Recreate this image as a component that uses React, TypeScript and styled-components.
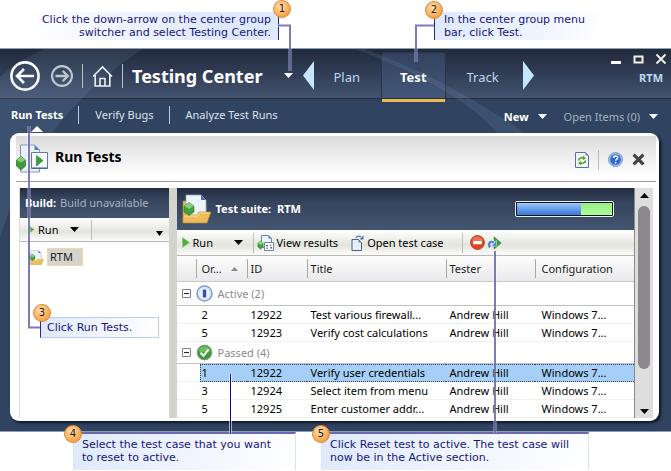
import React from "react";
import styled, { createGlobalStyle, css } from "styled-components";

const GlobalStyle = createGlobalStyle`
  * { box-sizing: border-box; }
  body { margin: 0; background: #fff; }
  button { margin: 0; padding: 0; border: 0; background: none; font: inherit; color: inherit; cursor: pointer; }
  a { color: inherit; text-decoration: none; }
  h1, h2, h3, p { margin: 0; font-size: inherit; font-weight: inherit; }
  svg { display: block; flex: none; }
`;

const Page = styled.div`
  position: relative;
  padding: 48px 0 39px;
  font: 11px/18px "Noto Sans", "Open Sans", sans-serif;
  color: #1c1c1c;
`;

const AppWindow = styled.div`
  position: relative;
  overflow: hidden;
  background: #304361;
  border-top: 1px solid #8ba0b5;
  border-bottom: 1px solid #8d9db0;
  padding-bottom: 10px;
`;

const Sweep = styled.svg`
  position: absolute;
  left: 0;
  top: 0;
  pointer-events: none;
`;

/* ---------- title bar ---------- */

const TitleBar = styled.header`
  display: flex;
  align-items: stretch;
  height: 50px;
  padding: 0 4px 0 10px;
  background: linear-gradient(#222a3c, #2f3b53 45%, #43536f);
  border-bottom: 1px solid #292d35;
`;

const NavCluster = styled.div`
  display: flex;
  align-items: center;
  padding-top: 4px;
  gap: 9px;
  > button:first-child { padding-right: 2px; }
`;

const IconButton = styled.button`
  display: flex;
  align-items: center;
  justify-content: center;
`;

const BarRule = styled.span`
  width: 1px;
  height: 24px;
  background: #b9c2cf;
`;

const CenterSwitcher = styled.button`
  display: flex;
  align-items: center;
  gap: 22px;
  padding: 0 10px 0 0;
  font-size: 18px;
  font-weight: 700;
  color: #fff;
  white-space: nowrap;
`;

const Tabs = styled.nav`
  display: flex;
  align-items: stretch;
`;

const TabLink = styled.a<{ $active?: boolean }>`
  position: relative;
  display: flex;
  align-items: center;
  margin: 0 2px;
  padding: 6px 18px 0;
  font-size: 13px;
  color: #b9d9ee;
  ${(p) =>
    p.$active &&
    css`
      margin-top: 4px;
      padding-top: 2px;
      font-weight: 700;
      color: #fff;
      background: linear-gradient(#33435f, #44577a);
      border-radius: 3px 3px 0 0;
      box-shadow: 0 0 0 1px #2a3448;
      &::after {
        content: "";
        position: absolute;
        left: 0;
        right: 0;
        bottom: -4px;
        height: 3px;
        background: #ecba4c;
      }
    `}
`;

const TabArrow = styled(IconButton)`
  padding-top: 4px;
  margin-right: -1px;
  &:last-child { margin: 0 0 0 4px; }
`;

const WindowSide = styled.div`
  display: flex;
  flex-direction: column;
  align-items: flex-end;
  margin-left: auto;
  padding-top: 4px;
  gap: 4px;
`;

const WindowButtons = styled.div`
  display: flex;
  align-items: center;
  gap: 11px;
`;

const ProjectName = styled.span`
  padding-right: 4px;
  font-weight: 700;
  color: #b9dcf2;
`;

/* ---------- sub navigation ---------- */

const SubNav = styled.nav`
  position: relative;
  display: flex;
  align-items: center;
  height: 34px;
  padding: 0 13px 2px 11px;
  color: #e3e9f0;
`;

const SubLink = styled.a<{ $active?: boolean }>`
  position: relative;
  font-weight: ${(p) => (p.$active ? 700 : 400)};
  color: ${(p) => (p.$active ? "#fff" : "#dbe3ec")};
  ${(p) =>
    p.$active &&
    css`
      &::after {
        content: "";
        position: absolute;
        left: 50%;
        top: 20px;
        margin-left: -6px;
        border: 6px solid transparent;
        border-top: 0;
        border-bottom-color: #fff;
      }
    `}
`;

const SubRule = styled.span`
  width: 1px;
  height: 18px;
  margin: 0 16px 0 15px;
  background: #b5cfe4;
`;

const SubMenu = styled.button<{ $muted?: boolean }>`
  display: flex;
  align-items: center;
  gap: 9px;
  margin-left: 17px;
  padding-top: 3px;
  font-weight: ${(p) => (p.$muted ? 400 : 700)};
  color: ${(p) => (p.$muted ? "#a6afbb" : "#fff")};
  &:first-of-type { margin-left: auto; }
`;

/* ---------- content panel ---------- */

const Panel = styled.main`
  position: relative;
  margin: 0 12px 0 10px;
  padding: 3px 3px 3px 6px;
  background: #fff;
  border-radius: 9px;
  box-shadow: 2px 2px 3px #0c1626;
`;

const PanelHeader = styled.div`
  display: flex;
  align-items: center;
  height: 46px;
  padding: 0 11px 0 0;
  margin-bottom: 6px;
  background: linear-gradient(#dcdcdc, #fff 90%);
  border-bottom: 1px solid #98989c;
`;

const PanelTitle = styled.h1`
  padding: 0 0 4px 7px;
  font-size: 14px;
  font-weight: 700;
  color: #000;
`;

const PanelTools = styled.div`
  display: flex;
  align-items: center;
  gap: 9px;
  margin-left: auto;
  padding-top: 2px;
`;

const ToolRule = styled.span`
  width: 1px;
  height: 20px;
  background: #bdbdb2;
`;

const Columns = styled.div`
  display: flex;
  align-items: stretch;
  margin-left: 3px;
  padding-right: 3px;
`;

const BuildPane = styled.section`
  flex: 0 0 148px;
  border-left: 1px solid #dcdcdc;
`;

const Splitter = styled.div`
  flex: 0 0 8px;
  background: #d4d3ce;
`;

const SuitePane = styled.section`
  flex: 1;
  min-width: 0;
`;

const PaneHeading = styled.h2<{ $tall?: boolean }>`
  display: flex;
  align-items: center;
  gap: 4px;
  height: ${(p) => (p.$tall ? 42 : 30)}px;
  padding: 0 20px 0 5px;
  background: linear-gradient(#242d40, #36445e 35%, #435570);
  color: #aab1bc;
  white-space: pre;
  strong { color: #fff; }
`;

const Toolbar = styled.div<{ $height: number }>`
  display: flex;
  align-items: center;
  height: ${(p) => p.$height}px;
  padding-left: 5px;
  background: linear-gradient(#fff, #e4e4de 60%, #fbfbfa);
  border-bottom: 1px solid #b7b7b7;
  color: #000;
`;

const ToolButton = styled.button<{ $width?: number }>`
  display: flex;
  align-items: center;
  gap: 3px;
  width: ${(p) => (p.$width ? p.$width + "px" : "auto")};
  white-space: nowrap;
  svg + svg { margin-left: auto; }
`;

const BuildTools = styled(Toolbar)`
  padding: 0 6px 0 9px;
  ${ToolRule} { margin: 0 0 0 12px; }
  > button:last-child { margin: 8px 0 0 auto; }
`;

const SuiteTools = styled(Toolbar)`
  ${ToolRule} { margin: 0 3px 0 10px; }
  > button:nth-of-type(3) { margin-left: 13px; }
  > button:nth-of-type(4) { margin: 0 3px 0 4px; }
  ${ToolRule}:nth-of-type(2) { margin-left: 18px; }
`;

const Tree = styled.div`
  padding: 6px 9px;
`;

const TreeItem = styled.button`
  display: flex;
  align-items: center;
  gap: 3px;
  span {
    width: 36px;
    height: 18px;
    line-height: 16px;
    text-align: left;
    padding-left: 2px;
    background: #d4d3ce;
    border: 1px solid #f3d6a0;
  }
`;

const Progress = styled.span`
  display: flex;
  width: 99px;
  height: 16px;
  margin-left: auto;
  padding: 1px;
  background: #101418;
  border: 1px solid #e9eef5;
  border-radius: 2px;
`;

const Segment = styled.span<{ $share: number; $tone: "run" | "pass" }>`
  flex: ${(p) => p.$share};
  background: ${(p) =>
    p.$tone === "run" ? "linear-gradient(#a5c9fa, #6ba0ec 45%, #3a76d4)" : "linear-gradient(#98ee84, #adfc9b)"};
`;

/* ---------- grid ---------- */

const Grid = styled.table`
  width: 100%;
  table-layout: fixed;
  border-collapse: separate;
  border-spacing: 0;
  th, td { padding: 0; text-align: left; font-weight: 400; white-space: nowrap; overflow: hidden; }
`;

const HeadCell = styled.th`
  height: 26px;
  background: linear-gradient(#a9a99c, #a9a99c) left center / 1px 19px no-repeat,
    linear-gradient(#fdfdfd, #e9e9ec);
  border-bottom: 1px solid #c9c9c9;
  && { padding-left: 4px; }
  &:nth-child(1) { background-position: right 3px center, 0 0; }
  &&:nth-child(2) { background: linear-gradient(#fdfdfd, #e9e9ec); padding-left: 2px; }
  &&:nth-child(6) { padding-left: 7px; }
  span { display: flex; align-items: center; gap: 9px; }
`;

const GroupCell = styled.td<{ $height: number }>`
  height: ${(p) => p.$height}px;
  border-bottom: 1px solid #bcc3cb;
  color: #8c8c8c;
  div { display: flex; align-items: center; gap: 5px; padding-left: 5px; }
`;

const Row = styled.tr<{ $selected?: boolean }>`
  td {
    height: 18px;
    line-height: 17px;
    padding-left: 4px;
    border-bottom: 1px solid #f0f0f0;
    color: #000;
  }
  td:nth-child(2) { padding-left: 2px; }
  td:nth-child(6) { padding-left: 7px; }
  ${(p) =>
    p.$selected &&
    css`
      td + td {
        line-height: 16px;
        background: #a5cff7;
        border-top: 1px dotted #2c3f55;
        border-bottom: 1px dotted #2c3f55;
      }
      td:nth-child(2) { border-left: 1px dotted #2c3f55; padding-left: 1px; }
    `}
`;

const ScrollTrack = styled.div`
  flex: 0 0 19px;
  display: flex;
  flex-direction: column;
  align-items: center;
  padding: 5px 0 4px;
  background: #dedede;
  border-left: 1px solid #8a8a8a;
`;

const ScrollThumb = styled.div`
  flex: 0 0 163px;
  width: 12px;
  margin: 8px 0 auto;
  border-radius: 6px;
  background: #8c898c;
`;

/* ---------- callouts ---------- */

const Callout = styled.aside<{ $x: number; $y: number; $w: number; $kind: "right" | "left" | "box" | "foot" }>`
  position: absolute;
  left: ${(p) => p.$x}px;
  top: ${(p) => p.$y}px;
  width: ${(p) => p.$w}px;
  padding: 1px 9px;
  font: 11px/13px "DejaVu Sans", sans-serif;
  color: #16167a;
  white-space: nowrap;
  ${(p) =>
    p.$kind === "right" &&
    css`
      text-align: right;
      padding-right: 7px;
      border-right: 1px solid #2b2b82;
      background: linear-gradient(90deg, #fff, #dfe9fd 75%);
    `}
  ${(p) =>
    p.$kind === "left" &&
    css`
      border-left: 1px solid #2b2b82;
      background: linear-gradient(100deg, #dfe9fd, #eef4fe 60%, #fff);
    `}
  ${(p) =>
    p.$kind === "box" &&
    css`
      padding: 3px 6px;
      border: 1px solid #b9cdf5;
      border-left-color: #2b2b82;
      background: linear-gradient(100deg, #dfe9fd, #fff);
    `}
  ${(p) =>
    p.$kind === "foot" &&
    css`
      padding: 4px 8px 6px;
      border: 1px solid #d6e4f8;
      border-top: 2px solid #6a6ab0;
      border-bottom: 0;
      background: linear-gradient(100deg, #dfe9fd, #fff);
    `}
`;

const Badge = styled.span<{ $x: number; $y: number }>`
  position: absolute;
  left: ${(p) => p.$x - 9}px;
  top: ${(p) => p.$y - 9}px;
  width: 18px;
  height: 18px;
  border-radius: 9px;
  border: 1px solid #d98a3c;
  background: radial-gradient(circle at 40% 35%, #ffe0b0, #fbb05a 55%, #f08a1e);
  font: 10px/16px "DejaVu Sans", sans-serif;
  text-align: center;
  color: #1c1c1c;
`;

const Leaders = styled.svg`
  position: absolute;
  left: 0;
  top: 0;
  pointer-events: none;
`;

/* ---------- icons ---------- */

const Caret = ({ size = 9, color = "#000" }: { size?: number; color?: string }) => (
  <svg width={size} height={5} viewBox="0 0 10 5" preserveAspectRatio="none" aria-hidden>
    <path d="M0 0h10L5 5z" fill={color} />
  </svg>
);

const CircleArrow = ({ size, flip, color }: { size: number; flip?: boolean; color: string }) => (
  <svg width={size} height={size} viewBox="0 0 30 30" fill="none" stroke={color} aria-hidden>
    <circle cx="15" cy="15" r="13.6" strokeWidth={flip ? 3 : 2.6} />
    <path
      d={flip ? "M6 15h17M16 8l7 7-7 7" : "M24 15H7M14 8l-7 7 7 7"}
      strokeWidth={flip ? 3.2 : 2.6}
    />
  </svg>
);

const HomeIcon = () => (
  <svg width="21" height="22" viewBox="0 0 21 22" fill="none" stroke="#eef1f5" strokeWidth="1.6" aria-hidden>
    <path d="M1 11.5 10.5 2 20 11.5M3.2 10v11h14.6V10M8 21v-7.500h5V21" />
  </svg>
);

const PlayIcon = ({ w = 8, h = 11 }: { w?: number; h?: number }) => (
  <svg width={w} height={h} viewBox="0 0 8 11" aria-hidden>
    <path d="M.5.5 7.500 5.500.5 10.500z" fill="#4cab3f" stroke="#8fcb86" strokeWidth=".8" />
  </svg>
);

const RunTestsIcon = () => (
  <svg width="32" height="30" viewBox="0 0 32 30" aria-hidden>
    <path d="M4.500 1h14l5 5v22H4.500z" fill="#eaf1fb" stroke="#8295bd" />
    <path d="M18.500 1v5h5z" fill="#5f7fb5" />
    <path d="M15.500 8.500h16v16h-16z" fill="#f6faff" stroke="#5f78ad" />
    <path d="M15.500 24h16" stroke="#3d5690" />
    <path d="M20.500 11.500 27 16.500l-6.500 5.500z" fill="#3ba034" stroke="#237b24" strokeWidth=".6" />
    <path d="M5 12.500 9.500 16v6L5 26 .5 22v-6z" fill="#3f9a3c" stroke="#2a6f2c" strokeWidth=".7" />
    <path d="M5 12.500 9.500 16 5 18.500.5 16z" fill="#86cf7c" />
  </svg>
);

const SuiteIcon = ({ size = 30 }: { size?: number }) => (
  <svg width={size} height={size} viewBox="0 0 30 30" aria-hidden>
    <path d="M1 7h8l2 3h13v18H1z" fill="#e9bd5c" stroke="#b98a2c" strokeWidth=".6" />
    <path d="M4 1h15l5 5v16H4z" fill="#eef4fc" stroke="#93a6c8" strokeWidth=".8" />
    <path d="M19 1v5h5z" fill="#4f6fa8" />
    <path d="M1 21h14l2-3h12l-4 11H1z" fill="#eebb58" stroke="#b98a2c" strokeWidth=".7" />
    <path d="M2 22h14l2-3h9" fill="none" stroke="#fbe3a4" />
    <path d="M7 8.500 12 12v6l-5 3.500L2 18v-6z" fill="#42a03e" stroke="#2d7a30" strokeWidth=".6" />
    <path d="M7 8.500 12 12l-5 3-5-3z" fill="#85cf7b" />
  </svg>
);

const RefreshPageIcon = () => (
  <svg width="14" height="16" viewBox="0 0 14 16" aria-hidden>
    <path d="M.5.5h10l3 3v12H.5z" fill="#f0f5fc" stroke="#5d7295" />
    <path d="M10.500.5v3h3z" fill="#5a7cb8" />
    <g fill="none" stroke="#3f9a20" strokeWidth="1.500">
      <path d="M3.500 8.500C3.500 6 6 5.500 9 6" />
      <path d="M10.500 8.500c0 2.500-2.500 3-5.500 2.500" />
    </g>
    <path d="m8 3.500 3 2.700L8 8.500zM6 8.500l-3 2.700 3 2.300z" fill="#5fae28" />
  </svg>
);

const HelpIcon = () => (
  <svg width="15" height="15" viewBox="0 0 15 15" aria-hidden>
    <circle cx="7.500" cy="7.500" r="7" fill="#9cc0ee" stroke="#7c9ccc" />
    <circle cx="7.500" cy="7.500" r="5.300" fill="#2f68cf" />
    <path d="M5.500 6c0-2.600 4.200-2.500 4.200-.2 0 1.500-2.100 1.400-2.100 3M7.600 10v1.500" fill="none" stroke="#fff" strokeWidth="1.500" />
  </svg>
);

const CrossIcon = ({ size, color, weight }: { size: number; color: string; weight: number }) => (
  <svg width={size} height={size} viewBox="0 0 12 12" aria-hidden>
    <path d="m1.500 1.500 9 9m0-9-9 9" stroke={color} strokeWidth={weight} />
  </svg>
);

const ResultsIcon = () => (
  <svg width="17" height="16" viewBox="0 0 17 16" aria-hidden>
    <path d="M4.500.5h7l3 3v9h-10z" fill="#edf4fd" stroke="#6883b3" />
    <path d="M11.500.5v3h3z" fill="#4f72ae" />
    <path d="M7.500 7.500h9v8h-9z" fill="#fff" stroke="#6a86b8" />
    <path d="M9 10h2v1.500H9zM13 12h2v1.500h-2z" fill="#4a7ad8" />
    <path d="M12.500 9.500h2V11h-2zM9 12.500h2V14H9z" fill="#e08a5a" />
    <path d="m3.500 5.500 3 2.500v4l-3 2.500-3-2.500V8z" fill="#3f9f3c" />
    <path d="m3.500 5.500 3 2.500-3 2-3-2z" fill="#8bd181" />
  </svg>
);

const OpenCaseIcon = () => (
  <svg width="13" height="16" viewBox="0 0 13 16" aria-hidden>
    <path d="M1 4.500h6.500l3 3v8H1z" fill="#e6eefa" stroke="#4c5f83" />
    <path d="M7.500 4.500v3h3z" fill="#5f7fb5" />
    <path d="M5 3c1-2 3-2.500 5-1" fill="none" stroke="#5a7ab5" strokeWidth="1.300" />
    <path d="M12.500.3v4.200H8.700z" fill="#4c6ca8" />
  </svg>
);

const BlockIcon = () => (
  <svg width="15" height="15" viewBox="0 0 15 15" aria-hidden>
    <circle cx="7.500" cy="7.500" r="6.900" fill="#e0441a" stroke="#b0482c" />
    <path d="M2 6a5.600 5.600 0 0 1 11 0z" fill="#f28a64" opacity=".7" />
    <rect x="3" y="6" width="9" height="3.200" rx=".6" fill="#fff" />
  </svg>
);

const ResetIcon = () => (
  <svg width="14" height="14" viewBox="0 0 14 14" aria-hidden>
    <path d="M6 .8 13.200 7 6 13.200V10l3-3-3-3z" fill="#3f9d39" stroke="#2c7a2c" strokeWidth=".5" />
    <path d="M1.800 11.500C0 7 2.500 4.500 6 6.500" fill="none" stroke="#4a7fd6" strokeWidth="2.200" />
    <path d="M8.500 4.500v5.700H3.500z" fill="#4a7fd6" stroke="#dce8fb" strokeWidth=".5" />
  </svg>
);

const ActiveIcon = () => (
  <svg width="17" height="17" viewBox="0 0 17 17" aria-hidden>
    <circle cx="8.500" cy="8.500" r="7.500" fill="#fff" stroke="#7d9cd6" strokeWidth="1.600" />
    <circle cx="8.500" cy="8.500" r="5.800" fill="#eaf1fc" stroke="#cbd9f2" />
    <rect x="6.800" y="4.500" width="3.400" height="8" rx="1" fill="#2e55a8" />
  </svg>
);

const PassedIcon = () => (
  <svg width="17" height="17" viewBox="0 0 17 17" aria-hidden>
    <circle cx="8.500" cy="8.500" r="7.400" fill="#3f9c38" stroke="#8a9a8a" />
    <path d="M2.500 7a6.200 6.200 0 0 1 12 0c-4 2-8 2-12 0z" fill="#8fd07f" opacity=".6" />
    <path d="m4.500 8.800 3 3 5-6.300" fill="none" stroke="#fff" strokeWidth="2" />
  </svg>
);

const CollapseIcon = () => (
  <svg width="9" height="9" viewBox="0 0 9 9" fill="none" stroke="#80838c" aria-hidden>
    <path d="M.5.5h8v8h-8z" fill="#fff" />
    <path d="M2 4.500h5" stroke="#222" />
  </svg>
);

/* ---------- data ---------- */

type TestCase = { order: number; id: number; title: string; selected?: boolean };

const groups: { name: string; count: number; height: number; icon: React.ReactNode; cases: TestCase[] }[] = [
  {
    name: "Active",
    count: 2,
    height: 24,
    icon: <ActiveIcon />,
    cases: [
      { order: 2, id: 12922, title: "Test various firewall..." },
      { order: 5, id: 12923, title: "Verify cost calculations" },
    ],
  },
  {
    name: "Passed",
    count: 4,
    height: 22,
    icon: <PassedIcon />,
    cases: [
      { order: 1, id: 12922, title: "Verify user credentials", selected: true },
      { order: 3, id: 12924, title: "Select item from menu" },
      { order: 5, id: 12925, title: "Enter customer addr..." },
    ],
  },
];

const leaderPaths = ["M278 25.500H290V71", "M434 25.500H416V62", "M40 327.500H29V126", "M495 251V433"];

export default function App() {
  return (
    <Page>
      <GlobalStyle />
      <AppWindow>
        <TitleBar>
          <NavCluster>
            <IconButton aria-label="Back"><CircleArrow size={30} color="#fff" /></IconButton>
            <IconButton aria-label="Forward"><CircleArrow size={22} flip color="#c3c6cb" /></IconButton>
            <BarRule />
            <IconButton aria-label="Home"><HomeIcon /></IconButton>
            <BarRule />
            <CenterSwitcher>
              Testing Center
              <Caret color="#fff" />
            </CenterSwitcher>
          </NavCluster>
          <Tabs aria-label="Center group">
            <TabArrow aria-label="Previous">
              <svg width="11" height="29" viewBox="0 0 11 29" aria-hidden><path d="M11 0v29L0 14.500z" fill="#c5e7fb" /></svg>
            </TabArrow>
            <TabLink href="#plan">Plan</TabLink>
            <TabLink href="#test" $active aria-current="page">Test</TabLink>
            <TabLink href="#track">Track</TabLink>
            <TabArrow aria-label="Next">
              <svg width="11" height="29" viewBox="0 0 11 29" aria-hidden><path d="M0 0v29l11-14.500z" fill="#c5e7fb" /></svg>
            </TabArrow>
          </Tabs>
          <WindowSide>
            <WindowButtons>
              <IconButton aria-label="Minimize">
                <svg width="11" height="11" viewBox="0 0 11 11" aria-hidden><path d="M0 7h10v3H0z" fill="#fff" /></svg>
              </IconButton>
              <IconButton aria-label="Maximize">
                <svg width="11" height="11" viewBox="0 0 11 11" aria-hidden><path d="M1.500 2.500h8v6h-8z" fill="none" stroke="#f3f0e4" strokeWidth="2" /></svg>
              </IconButton>
              <IconButton aria-label="Close"><CrossIcon size={12} color="#f3f0e4" weight={2} /></IconButton>
            </WindowButtons>
            <ProjectName>RTM</ProjectName>
          </WindowSide>
        </TitleBar>
        <Sweep width="660" height="384" viewBox="0 0 660 384" aria-hidden>
          <g fill="#a9c4ec" fillOpacity=".1">
            <path d="M45 0H143C95 30 55 75 35 110 20 135 8 160 0 190V28Q20 10 45 0z" />
            <path d="M355 0h10Q450 32 525 84h-28Q460 40 355 0z" />
          </g>
        </Sweep>
        <SubNav aria-label="Test">
          <SubLink href="#run" $active aria-current="page">Run Tests</SubLink>
          <SubRule />
          <SubLink href="#bugs">Verify Bugs</SubLink>
          <SubRule />
          <SubLink href="#analyze">Analyze Test Runs</SubLink>
          <SubMenu>New <Caret color="#fff" /></SubMenu>
          <SubMenu $muted>Open Items (0) <Caret color="#fff" /></SubMenu>
        </SubNav>
        <Panel>
          <PanelHeader>
            <RunTestsIcon />
            <PanelTitle>Run Tests</PanelTitle>
            <PanelTools>
              <IconButton aria-label="Refresh"><RefreshPageIcon /></IconButton>
              <ToolRule />
              <IconButton aria-label="Help"><HelpIcon /></IconButton>
              <IconButton aria-label="Close view"><CrossIcon size={13} color="#444" weight={3} /></IconButton>
            </PanelTools>
          </PanelHeader>
          <Columns>
            <BuildPane>
              <PaneHeading><strong>Build:</strong>Build unavailable</PaneHeading>
              <BuildTools $height={24}>
                <ToolButton $width={50}><PlayIcon w={6} h={7} />Run<Caret /></ToolButton>
                <ToolRule />
                <IconButton aria-label="More"><Caret size={7} /></IconButton>
              </BuildTools>
              <Tree>
                <TreeItem><SuiteIcon size={15} /><span>RTM</span></TreeItem>
              </Tree>
            </BuildPane>
            <Splitter />
            <SuitePane>
              <PaneHeading $tall>
                <SuiteIcon />
                <strong>Test suite:  RTM</strong>
                <Progress role="img" aria-label="Test progress">
                  <Segment $share={65} $tone="run" />
                  <Segment $share={32} $tone="pass" />
                </Progress>
              </PaneHeading>
              <SuiteTools $height={26}>
                <ToolButton $width={61}><PlayIcon />Run<Caret /></ToolButton>
                <ToolRule />
                <ToolButton><ResultsIcon />View results</ToolButton>
                <ToolButton><OpenCaseIcon />Open test case</ToolButton>
                <ToolRule />
                <IconButton aria-label="Block test"><BlockIcon /></IconButton>
                <IconButton aria-label="Reset test to active"><ResetIcon /></IconButton>
              </SuiteTools>
              <Grid>
                <colgroup>
                  <col style={{ width: 23 }} />
                  <col style={{ width: 47 }} />
                  <col style={{ width: 60 }} />
                  <col style={{ width: 139 }} />
                  <col style={{ width: 89 }} />
                  <col />
                </colgroup>
                <thead>
                  <tr>
                    <HeadCell aria-label="Group" />
                    <HeadCell>
                      <span>
                        Or...
                        <svg width="7" height="4" viewBox="0 0 7 4" aria-hidden><path d="M0 4h7L3.500 0z" fill="#8a8a8a" /></svg>
                      </span>
                    </HeadCell>
                    <HeadCell>ID</HeadCell>
                    <HeadCell>Title</HeadCell>
                    <HeadCell>Tester</HeadCell>
                    <HeadCell>Configuration</HeadCell>
                  </tr>
                </thead>
                {groups.map((g) => (
                  <tbody key={g.name}>
                    <tr>
                      <GroupCell colSpan={6} $height={g.height}>
                        <div>
                          <IconButton aria-label={"Collapse " + g.name}><CollapseIcon /></IconButton>
                          {g.icon}
                          {g.name} ({g.count})
                        </div>
                      </GroupCell>
                    </tr>
                    {g.cases.map((c) => (
                      <Row key={c.id} $selected={c.selected}>
                        <td />
                        <td>{c.order}</td>
                        <td>{c.id}</td>
                        <td>{c.title}</td>
                        <td>Andrew Hill</td>
                        <td>Windows 7...</td>
                      </Row>
                    ))}
                  </tbody>
                ))}
              </Grid>
            </SuitePane>
            <ScrollTrack>
              <svg width="9" height="5" viewBox="0 0 9 5" aria-hidden><path d="M0 5h9L4.500 0z" /></svg>
              <ScrollThumb />
              <Caret />
            </ScrollTrack>
          </Columns>
        </Panel>
      </AppWindow>

      <Callout $kind="right" $x={23} $y={12} $w={256}>
        Click the down-arrow on the center group<br />switcher and select Testing Center.
      </Callout>
      <Callout $kind="left" $x={434} $y={12} $w={169}>
        In the center group menu<br />bar, click Test.
      </Callout>
      <Callout $kind="box" $x={40} $y={317} $w={119}>Click Run Tests.</Callout>
      <Callout $kind="foot" $x={73} $y={432} $w={223}>
        Select the test case that you want<br />to reset to active.
      </Callout>
      <Callout $kind="foot" $x={321} $y={432} $w={268}>
        Click Reset test to active. The test case will<br />now be in the Active section.
      </Callout>
      <Leaders width="660" height="436" viewBox="0 0 660 436" fill="none" aria-hidden>
        {leaderPaths.map((d) => (
          <React.Fragment key={d}>
            <path d={d} stroke="#fff" strokeOpacity=".55" strokeWidth="3" />
            <path d={d} stroke="#5050a0" strokeOpacity=".75" strokeWidth="2" />
          </React.Fragment>
        ))}
        <path d="M230.500 374V433" stroke="#fff" strokeOpacity=".6" strokeWidth="3" />
        <path d="M230.500 374V433" stroke="#10106c" />
      </Leaders>
      <Badge $x={282} $y={9}>1</Badge>
      <Badge $x={434} $y={10}>2</Badge>
      <Badge $x={42} $y={313}>3</Badge>
      <Badge $x={73} $y={434}>4</Badge>
      <Badge $x={321} $y={434}>5</Badge>
    </Page>
  );
}
